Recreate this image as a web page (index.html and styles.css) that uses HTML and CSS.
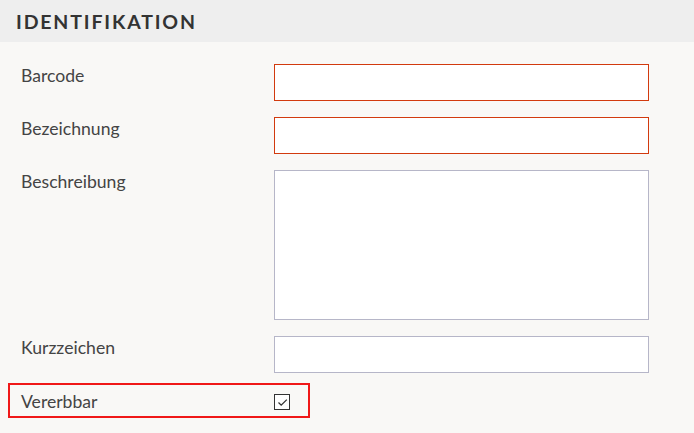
FILE: index.html
```html
<!DOCTYPE html>
<html lang="de">
<head>
<meta charset="utf-8">
<title>Identifikation</title>
<link rel="stylesheet" href="styles.css">
</head>
<body>
<section class="panel">
  <header class="panel-head"><h2 class="panel-title">IDENTIFIKATION</h2></header>
  <div class="form">
    <div class="row">
      <label class="label">Barcode</label>
      <input class="field field-required" type="text">
    </div>
    <div class="row">
      <label class="label">Bezeichnung</label>
      <input class="field field-required" type="text">
    </div>
    <div class="row">
      <label class="label">Beschreibung</label>
      <textarea class="field field-area"></textarea>
    </div>
    <div class="row">
      <label class="label">Kurzzeichen</label>
      <input class="field" type="text">
    </div>
    <div class="row-check">
      <span class="label label-check">Vererbbar</span>
      <span class="checkbox">
        <svg width="11" height="9" viewBox="0 0 11 9"><path d="M1.5 4.5 L4.2 7.2 L9.8 1.6" fill="none" stroke="#333" stroke-width="1.3"/></svg>
      </span>
    </div>
  </div>
</section>
</body>
</html>
```
FILE: styles.css
```css
html, body {
  margin: 0;
  padding: 0;
  background: #f9f8f6;
  font-family: Lato, "Open Sans", sans-serif;
}
.panel {
  width: 694px;
  height: 433px;
  overflow: hidden;
}
.panel-head {
  background: #eeeeee;
  height: 42px;
  display: flex;
  align-items: center;
  padding-left: 16px;
}
.panel-title {
  margin: 0;
  font-size: 19.5px;
  font-weight: 700;
  letter-spacing: 1.85px;
  color: #333333;
  line-height: 1;
  padding-top: 1px;
}
.form {
  padding: 22px 0 0 0;
  display: flex;
  flex-direction: column;
  gap: 16px;
}
.row {
  display: flex;
  align-items: flex-start;
  padding-left: 21px;
}
.label {
  width: 253px;
  flex: none;
  font-size: 17.6px;
  line-height: 21px;
  color: #444444;
  padding-top: 1px;
}
.field {
  box-sizing: border-box;
  width: 375px;
  height: 37px;
  margin: 0;
  border: 1px solid #b6b6c8;
  background: #ffffff;
  font-family: inherit;
  font-size: 15px;
  padding: 4px 8px;
  outline: none;
}
.field-required {
  border-color: #d23a0e;
}
.field-area {
  height: 150px;
  resize: none;
  display: block;
}
.row-check {
  margin: -6px 0 0 8px;
  width: 302px;
  height: 35px;
  box-sizing: border-box;
  border: 2px solid #f01818;
  display: flex;
  align-items: flex-start;
  padding: 6px 0 0 11px;
}
.label-check {
  padding-top: 0;
}
.checkbox {
  box-sizing: border-box;
  width: 16px;
  height: 16px;
  margin-top: 3px;
  border: 1.5px solid #333333;
  background: #ffffff;
  display: flex;
  align-items: center;
  justify-content: center;
}
```
